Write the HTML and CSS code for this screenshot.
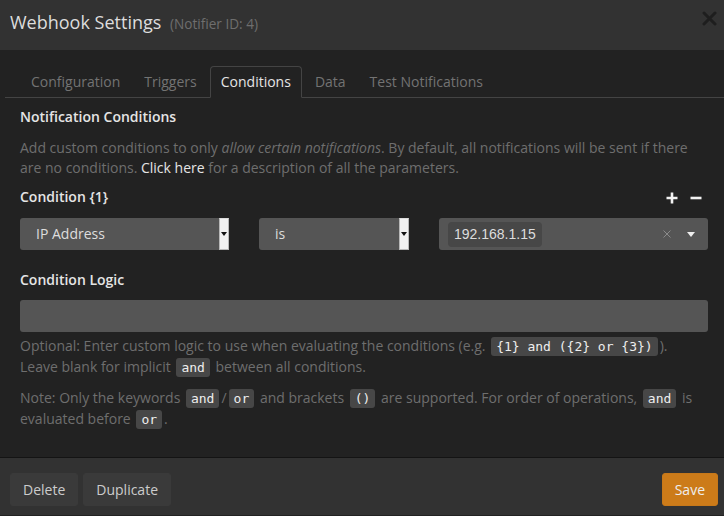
FILE: index.html
```html
<!DOCTYPE html>
<html>
<head>
<meta charset="utf-8">
<link rel="stylesheet" href="styles.css">
</head>
<body>
<div class="modal">
  <div class="modal-header">
    <h4 class="title">Webhook Settings <small class="sub">(Notifier ID: 4)</small></h4>
    <button class="close" aria-label="Close">
      <svg width="15" height="15" viewBox="0 0 15 15"><path d="M2 2 L13 13 M13 2 L2 13" stroke="#1e1e1e" stroke-width="3" stroke-linecap="round"/></svg>
    </button>
  </div>
  <div class="modal-body">
    <ul class="tabs">
      <li><a>Configuration</a></li>
      <li><a>Triggers</a></li>
      <li class="active"><a>Conditions</a></li>
      <li><a>Data</a></li>
      <li><a>Test Notifications</a></li>
    </ul>
    <div class="pane">
      <label class="lbl lbl-first">Notification Conditions</label>
      <p class="help help-intro">Add custom conditions to only <em>allow certain notifications</em>. By default, all notifications will be sent if there<br>are no conditions. <a class="link">Click here</a> for a description of all the parameters.</p>
      <div class="cond-head">
        <label class="lbl">Condition {1}</label>
        <div class="ops">
          <svg width="12" height="12" viewBox="0 0 12 12"><path d="M6 0.5 V11.5 M0.5 6 H11.5" stroke="#f2f2f2" stroke-width="2.6"/></svg>
          <svg width="12" height="12" viewBox="0 0 12 12"><path d="M0.5 6 H11.5" stroke="#f2f2f2" stroke-width="2.6"/></svg>
        </div>
      </div>
      <div class="cond-row">
        <div class="select"><span class="sel-text">IP Address</span><span class="native-arrow"></span></div>
        <div class="select"><span class="sel-text">is</span><span class="native-arrow"></span></div>
        <div class="selectize">
          <span class="tag">192.168.1.15</span>
          <svg class="clear" width="8" height="8" viewBox="0 0 8 8"><path d="M0.5 0.5 L7.5 7.5 M7.5 0.5 L0.5 7.5" stroke="#8a8a8a" stroke-width="1"/></svg>
          <span class="caret"></span>
        </div>
      </div>
      <label class="lbl lbl-logic">Condition Logic</label>
      <div class="text-input"></div>
      <p class="help help-logic">Optional: Enter custom logic to use when evaluating the conditions (e.g. <code>{1} and ({2} or {3})</code>).<br>Leave blank for implicit <code>and</code> between all conditions.</p>
      <p class="help help-note">Note: Only the keywords <code>and</code>/<code>or</code> and brackets <code>()</code> are supported. For order of operations, <code>and</code> is<br>evaluated before <code>or</code>.</p>
    </div>
  </div>
  <div class="modal-footer">
    <button class="btn">Delete</button>
    <button class="btn">Duplicate</button>
    <button class="btn btn-save">Save</button>
  </div>
</div>
</body>
</html>
```
FILE: styles.css
```css
html, body {
  margin: 0;
  padding: 0;
}
body {
  width: 724px;
  height: 516px;
  overflow: hidden;
  background: #222222;
  font-family: "Open Sans", sans-serif;
  font-size: 14px;
  line-height: 20px;
  color: #737373;
}
.modal {
  display: flex;
  flex-direction: column;
}
.modal-header {
  height: 50px;
  box-sizing: border-box;
  background: #323232;
  padding: 12px 7px 0 10px;
  display: flex;
  justify-content: space-between;
  align-items: flex-start;
}
.title {
  margin: 0;
  font-size: 18px;
  line-height: 20px;
  font-weight: 400;
  color: #dddddd;
}
.sub {
  font-size: 13.6px;
  color: #6e6e6e;
  margin-left: 4px;
}
.close {
  background: none;
  border: 0;
  padding: 0;
  margin-top: -1px;
  width: 15px;
  height: 15px;
  line-height: 0;
}
.modal-body {
  height: 407px;
  box-sizing: border-box;
  padding-top: 16px;
  background: #222222;
}
.tabs {
  list-style: none;
  margin: 0 0 0 5px;
  padding: 0 0 0 15px;
  display: flex;
  border-bottom: 1px solid #444444;
}
.tabs a {
  display: block;
  padding: 5px 10px;
  line-height: 20px;
  border: 1px solid transparent;
  border-radius: 4px 4px 0 0;
  margin-right: 2px;
  margin-bottom: -1px;
  color: #737373;
}
.tabs .active a {
  border-color: #444444 #444444 transparent;
  background: #222222;
  color: #e5e5e5;
}
.pane {
  padding: 0 16px 0 20px;
}
.lbl {
  display: block;
  font-weight: 600;
  color: #e5e5e5;
  line-height: 20px;
}
.lbl-first {
  margin-top: 9px;
  margin-bottom: 11px;
}
.help {
  margin: 0;
  color: #6e6e6e;
}
.link {
  color: #e5e5e5;
}
.help-intro {
  margin-bottom: 9px;
}
.cond-head {
  display: flex;
  justify-content: space-between;
  align-items: center;
  margin-bottom: 11px;
}
.ops {
  display: flex;
  gap: 12px;
  padding-right: 6px;
  margin-top: 2px;
}
.cond-row {
  display: grid;
  grid-template-columns: 209px 150px 269px;
  column-gap: 30px;
}
.select {
  height: 32px;
  background: #555555;
  border-radius: 3px 0 0 3px;
  display: flex;
  align-items: center;
  padding-left: 16px;
  color: #dddddd;
}
.native-arrow {
  margin-left: auto;
  align-self: stretch;
  width: 8px;
  background: #f0f0f0;
  border: 1px solid #b8b8b8;
  border-top-color: #dcdcdc;
  display: flex;
  align-items: center;
  justify-content: center;
}
.native-arrow::after {
  content: "";
  border-left: 3px solid transparent;
  border-right: 3px solid transparent;
  border-top: 4px solid #111111;
  margin-top: -1px;
}
.selectize {
  height: 32px;
  background: #555555;
  border-radius: 3px;
  display: flex;
  align-items: center;
  padding: 0 13px 0 9px;
}
.tag {
  background: #474747;
  border-radius: 4px;
  padding: 0 6px;
  height: 25px;
  line-height: 25px;
  font-family: "Liberation Sans", Arial, sans-serif;
  font-size: 14px;
  color: #dddddd;
}
.clear {
  margin-left: auto;
}
.caret {
  margin-left: 16px;
  border-left: 4.5px solid transparent;
  border-right: 4.5px solid transparent;
  border-top: 5px solid #eeeeee;
}
.lbl-logic {
  margin-top: 20px;
  margin-bottom: 10px;
}
.text-input {
  height: 32px;
  background: #555555;
  border-radius: 3px;
}
.help-logic {
  margin-top: 4px;
}
.help-note {
  margin-top: 10px;
}
code {
  font-family: "DejaVu Sans Mono", monospace;
  font-size: 13px;
  background: #474747;
  color: #eeeeee;
  padding: 2px 5px;
  border-radius: 3px;
  margin: 0 2px;
}
.modal-footer {
  border-top: 1px solid #141414;
  background: #323232;
  height: 58px;
  box-sizing: border-box;
  padding: 15px 6px 0 10px;
  display: flex;
  align-items: flex-start;
  gap: 5px;
}
.btn {
  font-family: "Open Sans", sans-serif;
  font-size: 14px;
  line-height: 19px;
  padding: 6px 12px;
  border: 1px solid #3a3a3a;
  background: #3a3a3a;
  color: #cccccc;
  border-radius: 3px;
}
.btn-save {
  margin-left: auto;
  background: #cc7b19;
  border-color: #c77819;
  color: #eeeeee;
}
```
